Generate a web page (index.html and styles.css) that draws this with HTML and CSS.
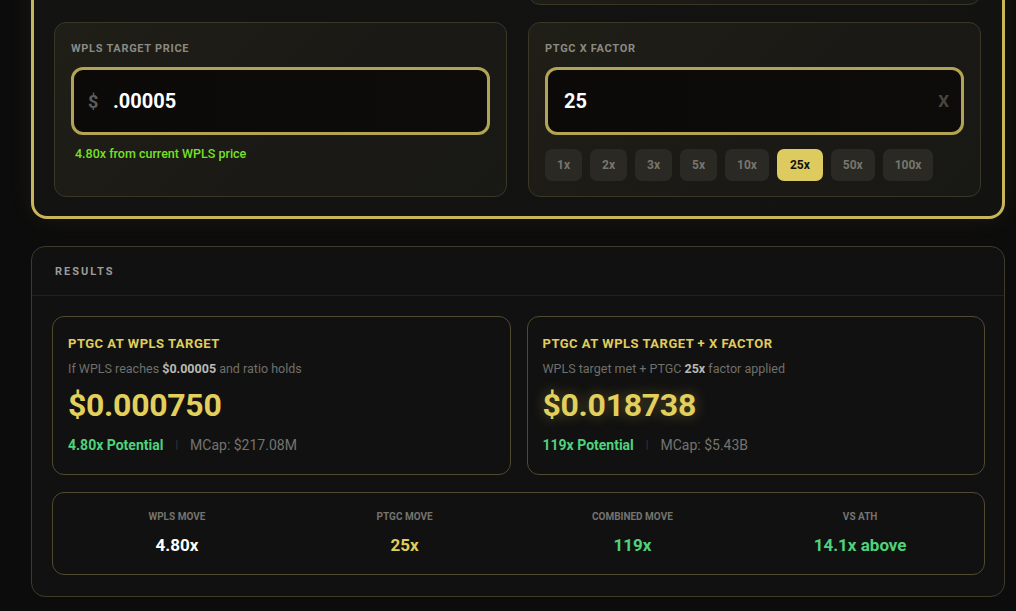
FILE: index.html
```html
<!DOCTYPE html>
<html lang="en">
<head>
<meta charset="utf-8">
<title>PTGC Calculator</title>
<link rel="stylesheet" href="styles.css">
</head>
<body>
<div class="page">
  <section class="inputs-panel">
    <div class="card card-short"></div>
    <div class="card card-tall"></div>

    <div class="card field">
      <div class="field-label">WPLS Target Price</div>
      <div class="input-box">
        <span class="prefix">$</span>
        <span class="input-value">.00005</span>
      </div>
      <div class="hint">4.80x from current WPLS price</div>
    </div>

    <div class="card field field-right">
      <div class="field-label">PTGC X Factor</div>
      <div class="input-box input-box-x">
        <span class="input-value">25</span>
        <span class="suffix">X</span>
      </div>
      <div class="chips">
        <span class="chip">1x</span>
        <span class="chip">2x</span>
        <span class="chip">3x</span>
        <span class="chip">5x</span>
        <span class="chip">10x</span>
        <span class="chip chip-active">25x</span>
        <span class="chip">50x</span>
        <span class="chip">100x</span>
      </div>
    </div>
  </section>

  <section class="results">
    <div class="results-head">Results</div>
    <div class="results-body">
      <div class="result-cards">
        <div class="result-card">
          <div class="rc-title">PTGC at WPLS Target</div>
          <div class="rc-sub">If WPLS reaches <b>$0.00005</b> and ratio holds</div>
          <div class="rc-value">$0.000750</div>
          <div class="rc-meta"><span class="potential">4.80x Potential</span><span class="sep">|</span><span class="mcap">MCap: $217.08M</span></div>
        </div>
        <div class="result-card">
          <div class="rc-title">PTGC at WPLS Target + X Factor</div>
          <div class="rc-sub">WPLS target met + PTGC <b>25x</b> factor applied</div>
          <div class="rc-value rc-glow">$0.018738</div>
          <div class="rc-meta"><span class="potential">119x Potential</span><span class="sep">|</span><span class="mcap">MCap: $5.43B</span></div>
        </div>
      </div>
      <div class="stats">
        <div class="stat"><div class="stat-label">WPLS Move</div><div class="stat-value v-white">4.80x</div></div>
        <div class="stat"><div class="stat-label">PTGC Move</div><div class="stat-value v-gold">25x</div></div>
        <div class="stat"><div class="stat-label">Combined Move</div><div class="stat-value v-green">119x</div></div>
        <div class="stat"><div class="stat-label">VS ATH</div><div class="stat-value v-green">14.1x above</div></div>
      </div>
    </div>
  </section>
</div>
</body>
</html>
```
FILE: styles.css
```css
* { box-sizing: border-box; }
html, body { margin: 0; padding: 0; }
body {
  background: #0c0c0c;
  font-family: Roboto, "Liberation Sans", sans-serif;
  color: #ddd;
  overflow: hidden;
  height: 611px;
}
.page {
  width: 974px;
  margin-left: 31px;
}

/* top input panel */
.inputs-panel {
  margin-top: -138px;
  border: 3px solid #c9b65a;
  border-radius: 16px;
  background: linear-gradient(135deg, #131312, #121210);
  padding: 20px 21px 19px 20px;
  display: grid;
  grid-template-columns: 1fr 1fr;
  column-gap: 21px;
  row-gap: 17px;
  align-items: start;
  box-shadow: 0 0 24px rgba(201, 182, 90, 0.08);
}
.card {
  border: 1px solid #3a3727;
  border-radius: 12px;
  background: linear-gradient(135deg, #1f1e17 0%, #1a1915 60%, #181815 100%);
}
.card-short { height: 60px; }
.card-tall { height: 120px; }
.field {
  height: 175px;
  padding: 19px 16px 0 16px;
}
.field-label {
  font-size: 11px;
  line-height: 14px;
  font-weight: 700;
  letter-spacing: 0.7px;
  text-transform: uppercase;
  color: #8a8a84;
}
.input-box {
  margin-top: 11px;
  height: 68px;
  border: 3px solid #b3a453;
  border-radius: 12px;
  background: linear-gradient(90deg, #0b0a08, #0d0c0a);
  display: flex;
  align-items: center;
  padding: 0 14px;
}
.prefix {
  font-size: 18px;
  font-weight: 700;
  color: #5e5e5a;
  width: 25px;
}
.input-value {
  font-size: 20px;
  font-weight: 700;
  color: #ffffff;
}
.input-box-x {
  justify-content: space-between;
  padding: 0 12px 0 16px;
}
.suffix {
  font-size: 17px;
  font-weight: 700;
  color: #46463f;
}
.hint {
  margin-top: 12px;
  padding-left: 4px;
  font-size: 12.5px;
  line-height: 14px;
  font-weight: 500;
  color: #76e025;
}
.chips {
  margin-top: 14px;
  display: flex;
  gap: 8px;
}
.chip {
  height: 32px;
  padding: 0 12px;
  border-radius: 7px;
  background: #2a2924;
  color: #77766e;
  font-size: 12px;
  font-weight: 700;
  display: flex;
  align-items: center;
  justify-content: center;
}
.chip-active {
  background: #ddcb5f;
  color: #111;
  padding: 0 13px;
}

/* results */
.results {
  margin-top: 27px;
  border: 1px solid #3f3b29;
  border-radius: 14px;
  background: #111111;
}
.results-head {
  height: 49px;
  border-bottom: 1px solid #222220;
  padding: 0 23px;
  display: flex;
  align-items: center;
  font-size: 11px;
  font-weight: 700;
  letter-spacing: 2px;
  text-transform: uppercase;
  color: #9c9c98;
}
.results-body {
  padding: 20px 19px 21px 20px;
}
.result-cards {
  display: grid;
  grid-template-columns: 1fr 1fr;
  gap: 16px;
}
.result-card {
  height: 159px;
  border: 1px solid #4f4a30;
  border-radius: 12px;
  background: #111111;
  padding: 19px 15px 0 15px;
}
.rc-title {
  font-size: 13px;
  line-height: 16px;
  font-weight: 700;
  text-transform: uppercase;
  letter-spacing: 0.5px;
  color: #e0cd5c;
}
.rc-sub {
  margin-top: 10px;
  font-size: 12.5px;
  line-height: 14px;
  color: #6f6f6b;
}
.rc-sub b { color: #b9b9b4; font-weight: 700; }
.rc-value {
  margin-top: 10px;
  font-size: 32px;
  line-height: 38px;
  font-weight: 700;
  letter-spacing: -0.3px;
  color: #e2cf5c;
}
.rc-glow { text-shadow: 0 0 14px rgba(226, 207, 92, 0.35); }
.rc-meta {
  margin-top: 13px;
  font-size: 14px;
  line-height: 16px;
  display: flex;
  align-items: center;
}
.potential { color: #4fd27c; font-weight: 700; }
.sep { color: #3a3a38; margin: 0 12px; font-size: 11px; }
.mcap { color: #74746f; }

.stats {
  margin-top: 17px;
  height: 83px;
  border: 1px solid #4f4a30;
  border-radius: 12px;
  padding: 0 10px;
  display: grid;
  grid-template-columns: repeat(4, 1fr);
  align-items: start;
}
.stat {
  text-align: center;
  padding-top: 18px;
}
.stat-label {
  font-size: 10px;
  line-height: 12px;
  font-weight: 700;
  text-transform: uppercase;
  color: #74746f;
}
.stat-value {
  margin-top: 12px;
  font-size: 17px;
  line-height: 20px;
  font-weight: 700;
}
.v-white { color: #ffffff; }
.v-gold { color: #e0cd5c; }
.v-green { color: #4fd27c; }
```
